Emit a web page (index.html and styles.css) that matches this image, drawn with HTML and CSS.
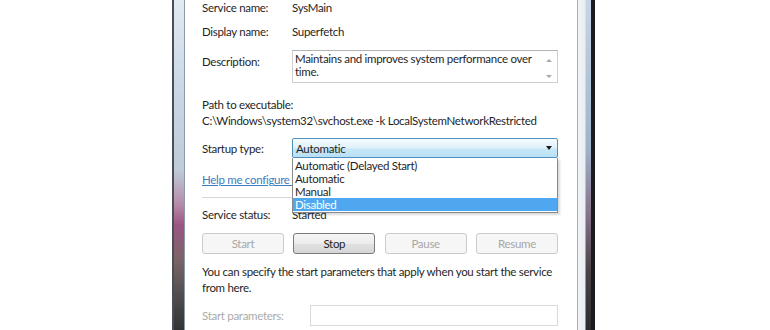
FILE: index.html
```html
<!DOCTYPE html>
<html>
<head>
    <title>Superfetch Properties</title>
    <link rel="stylesheet" href="styles.css">
</head>
<body>
    <!-- service properties window -->
    <div class="window">
        <div class="glass glass-left"></div>
        <div class="content">
            <div class="field row-service">
                <span class="label">Service name:</span>
                <span>SysMain</span>
            </div>
            <div class="field row-display">
                <span class="label">Display name:</span>
                <span>Superfetch</span>
            </div>
            <div class="field row-desc">
                <span class="label">Description:</span>
                <div class="desc-box">
                    Maintains and improves system performance over time.
                    <span class="arrow arrow-up"></span>
                    <span class="arrow arrow-down"></span>
                </div>
            </div>
            <div class="path-label">Path to executable:</div>
            <div class="path-value">C:\Windows\system32\svchost.exe -k LocalSystemNetworkRestricted</div>

            <div class="field row-startup">
                <span class="label">Startup type:</span>
                <div class="combo">
                    <span>Automatic</span>
                    <span class="combo-arrow"></span>
                </div>
            </div>
            <a class="link" href="#">Help me configure service recovery options.</a>
            <div class="sep"></div>

            <div class="field row-status">
                <span class="label">Service status:</span>
                <span>Started</span>
            </div>
            <div class="buttons">
                <button class="btn" disabled>Start</button>
                <button class="btn btn-stop">Stop</button>
                <button class="btn" disabled>Pause</button>
                <button class="btn" disabled>Resume</button>
            </div>
            <p class="note">You can specify the start parameters that apply when you start the service<br>from here.</p>
            <div class="field row-params">
                <span class="params-label">Start parameters:</span>
                <div class="params-input"></div>
            </div>

            <!-- open drop down list -->
            <ul class="dropdown">
                <li>Automatic (Delayed Start)</li>
                <li>Automatic</li>
                <li>Manual</li>
                <li class="selected">Disabled</li>
            </ul>
        </div>
        <div class="glass glass-right"></div>
    </div>
</body>
</html>
```

FILE: styles.css
```css
/* page */
body {
    margin: 0;
    height: 330px;
    overflow: hidden;
    background: #fff;
    font-family: Lato, 'Open Sans', sans-serif;
    font-size: 11.5px;
    letter-spacing: -0.3px;
    color: #1f1f1f;
}

/* window frame */
.window {
    box-sizing: border-box;
    display: flex;
    width: 423px;
    height: 330px;
    margin-left: 172px;
    border-left: 2px solid #4a4f57;
    border-right: 4px solid #1c1c20;
}

.glass-left {
    width: 10px;
    background: linear-gradient(to bottom, #e2eaf2 0, #c9d7e6 90px, #bfcbd9 170px, #b58aa8 205px, #9c5585 225px, #7a6466 260px, #4c4a4c 300px, #333 330px);
}

.glass-right {
    width: 13px;
    background:
        linear-gradient(to right, #f1f4f7 0, #e9eef3 7px, transparent 8px),
        linear-gradient(to bottom, #c6d6e7 0, #9fb2c8 150px, #86718a 215px, #4a4448 270px, #2c2c2e 330px);
}

/* dialog body */
.content {
    box-sizing: border-box;
    position: relative;
    width: 394px;
    padding: 0 19px 0 17px;
    border-left: 1px solid #8d99a6;
    border-right: 1px solid #a3adb7;
    background: #fff;
}

.field {
    display: flex;
    align-items: center;
}

.label {
    flex: none;
    width: 90px;
}

.row-service {
    height: 14px;
}

.row-display {
    height: 14px;
    margin-top: 10px;
}

.row-desc {
    align-items: flex-start;
    margin-top: 12px;
}

.row-desc .label {
    padding-top: 4px;
    line-height: 16px;
}

.desc-box {
    box-sizing: border-box;
    position: relative;
    width: 266px;
    height: 33px;
    padding: 1px 22px 0 2px;
    border: 1px solid #cfcfcf;
    border-top-color: #b4b4b4;
    line-height: 13px;
}

/* scroll arrows */
.arrow {
    position: absolute;
    right: 5px;
    width: 0;
    height: 0;
    border-left: 3px solid transparent;
    border-right: 3px solid transparent;
}

.arrow-up {
    top: 8px;
    border-bottom: 3px solid #a9a9a9;
}

.arrow-down {
    top: 24px;
    border-top: 3px solid #a9a9a9;
}

.path-label {
    margin-top: 14px;
    line-height: 16px;
}

.path-value {
    line-height: 15px;
    white-space: nowrap;
}

.row-startup {
    margin-top: 10px;
}

/* combo box */
.combo {
    box-sizing: border-box;
    display: flex;
    align-items: center;
    justify-content: space-between;
    width: 266px;
    height: 20px;
    padding: 0 5px 0 3px;
    border: 1px solid #4f8fc0;
    border-radius: 2px;
    background: linear-gradient(to bottom, #f5fbfe, #dff1fb 50%, #c7e7f7 55%, #b9e0f5);
}

.combo-arrow {
    width: 0;
    height: 0;
    border-left: 3.5px solid transparent;
    border-right: 3.5px solid transparent;
    border-top: 4px solid #1a1a1a;
}

.link {
    display: block;
    margin-top: 14px;
    line-height: 16px;
    color: #3b7dbf;
    white-space: nowrap;
}

.sep {
    margin-top: 9px;
    border-top: 1px solid #d6d6d6;
}

.row-status {
    margin-top: 9px;
    line-height: 16px;
}

/* buttons */
.buttons {
    display: flex;
    justify-content: space-between;
    margin-top: 10px;
}

.btn {
    width: 82px;
    height: 21px;
    padding: 0;
    border: 1px solid #cbcbcb;
    border-radius: 3px;
    background: #f6f6f6;
    color: #a7a7a7;
    font: inherit;
    letter-spacing: inherit;
}

.btn-stop {
    border-color: #7a7a7a;
    background: linear-gradient(to bottom, #f5f5f5, #ececec 50%, #e0e0e0 55%, #d6d6d6);
    color: #1f1f1f;
}

.note {
    margin: 10px 0 0;
    line-height: 16px;
    white-space: nowrap;
}

.row-params {
    margin-top: 9px;
}

.params-label {
    flex: none;
    width: 108px;
    color: #ababab;
}

.params-input {
    flex: 1;
    height: 21px;
    box-sizing: border-box;
    border: 1px solid #dadada;
}

/* drop down list */
.dropdown {
    position: absolute;
    top: 158px;
    left: 107px;
    box-sizing: border-box;
    width: 266px;
    margin: 0;
    padding: 1px 0 1px;
    list-style: none;
    border: 1px solid #8a8a8a;
    border-top: none;
    background: #fff;
    box-shadow: 2px 2px 2px rgba(0, 0, 0, 0.15);
}

.dropdown li {
    height: 13px;
    padding-left: 2px;
    line-height: 13px;
}

.dropdown .selected {
    background: #4fa8ef;
    color: #fff;
}
```
